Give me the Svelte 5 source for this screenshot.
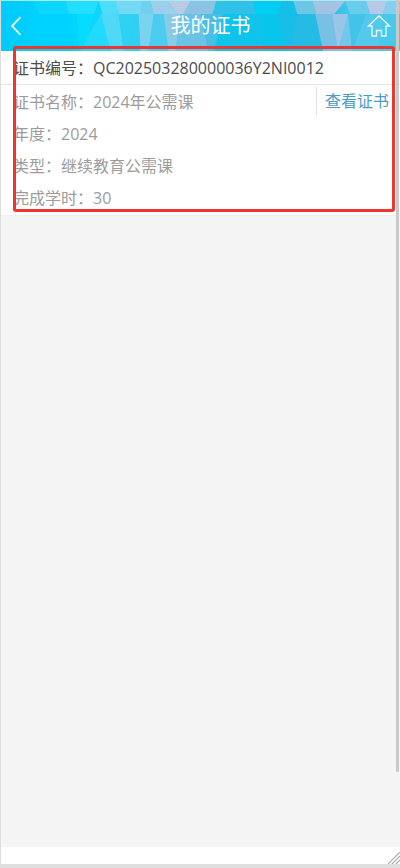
<script lang="ts">
	const certificate = {
		number: "QC202503280000036Y2NI0012",
		rows: [
			{ label: "证书名称", value: "2024年公需课" },
			{ label: "年度", value: "2024" },
			{ label: "类型", value: "继续教育公需课" },
			{ label: "完成学时", value: "30" },
		],
	};
</script>

<div class="page">
	<header>
		<svg class="pattern" viewBox="0 0 400 50" preserveAspectRatio="none" aria-hidden="true">
			<defs>
				<linearGradient id="base">
					<stop offset="0" stop-color="#00cbfb" />
					<stop offset="0.2" stop-color="#02d5ff" />
					<stop offset="0.3" stop-color="#22d2f8" />
					<stop offset="0.4" stop-color="#48cbee" />
					<stop offset="0.5" stop-color="#52c3e6" />
					<stop offset="0.58" stop-color="#0cc3ea" />
					<stop offset="0.78" stop-color="#1abde6" />
					<stop offset="0.88" stop-color="#48c6ea" />
					<stop offset="1" stop-color="#48c9eb" />
				</linearGradient>
			</defs>
			<rect width="400" height="50" fill="url(#base)" />
			<path d="M33 0H65L68 13H38Z" fill="#0ad6ff" />
			<path d="M65 0H98L93 13H68Z" fill="#20dfff" />
			<path d="M98 0H115L118 13H102Z" fill="#4edcfb" />
			<path d="M115 0H142L140 13H118Z" fill="#76d9f4" />
			<path d="M142 0H150L153 13H140Z" fill="#70d0ee" />
			<path d="M150 0H167L177 13H153Z" fill="#9bcfea" />
			<path d="M167 0H190L183 13H177Z" fill="#bccbe4" />
			<path d="M190 0H216L212 13H183Z" fill="#8dc3e2" />
			<path d="M216 0H253L256 13H212Z" fill="#30c1e8" />
			<path d="M253 0H282L277 13H256Z" fill="#02cdf2" />
			<path d="M293 0H312L316 13H297Z" fill="#6cc6e6" />
			<path d="M312 0H345L334 13H316Z" fill="#a3c3e2" />
			<path d="M345 0H366L370 13H350Z" fill="#68cdec" />
			<path d="M366 0H387L383 13H370Z" fill="#b6c9e6" />
			<path d="M387 0H400V13H383Z" fill="#84d0ee" />
			<path d="M32 13H66L74 50H40Z" fill="#00d2ff" />
			<path d="M76 13H93L84 50H78Z" fill="#05dcff" />
			<path d="M80 50L88 34L100 13L110 50Z" fill="#22dafc" />
			<path d="M100 13H118L123 50H110Z" fill="#50d9f7" />
			<path d="M118 13H134L126 50H123Z" fill="#2fd1f4" />
			<path d="M138 13H153L148 50H140Z" fill="#7ad3ef" />
			<path d="M153 13H163L168 50H148Z" fill="#4ccdef" />
			<path d="M163 13H180L175 50H168Z" fill="#89cae7" />
			<path d="M180 13H200L208 50H175Z" fill="#6ac3e5" />
			<path d="M200 13H222L212 50H208Z" fill="#4abfe5" />
			<path d="M224 13H258L264 50H214Z" fill="#10c3ea" />
			<path d="M258 13H277L286 50H264Z" fill="#08c5ec" />
			<path d="M297 13H315L323 50H290Z" fill="#24bbe4" />
			<path d="M315 13H332L340 50H323Z" fill="#78c1e5" />
			<path d="M332 13H348L338 50Z" fill="#9bc5e7" />
			<path d="M348 13L352 50H337Z" fill="#73c8ea" />
			<path d="M348 13H366L352 50Z" fill="#42c3e9" />
			<path d="M366 13H383L378 50H352Z" fill="#54c9eb" />
		</svg>
		<button class="icon-button" type="button" aria-label="返回">
			<svg viewBox="0 0 12 20" width="12" height="20">
				<path d="M10.500 1.200L2 10L10.500 18.800" />
			</svg>
		</button>
		<h1>我的证书</h1>
		<a class="icon-button home" href="#home" aria-label="首页">
			<svg viewBox="0 0 24 24" width="24" height="24">
				<path d="M1.500 12L12 2L22.500 12H19V22H14.500V16.500H9.500V22H5V12Z" />
			</svg>
		</a>
	</header>

	<main>
		<section class="card">
			<h2>证书编号：{certificate.number}</h2>
			<div class="details">
				<dl>
					{#each certificate.rows as row}
						<div class="row">
							<dt>{row.label}：</dt>
							<dd>{row.value}</dd>
						</div>
					{/each}
				</dl>
				<a class="view" href="#certificate">查看证书</a>
			</div>
		</section>
		<div class="outline"></div>
	</main>

	<footer>
		<svg viewBox="0 0 12 12" width="12" height="12" aria-hidden="true">
			<path d="M0 12L12 0M4 12L12 4M8 12L12 8" />
		</svg>
	</footer>
	<div class="scroll-thumb"></div>
</div>

<style>
	:global(body) {
		background: #f4f4f4;
	}
	.page {
		position: relative;
		display: flex;
		flex-direction: column;
		box-sizing: border-box;
		min-height: 100vh;
		border-left: 1px solid #ddd;
		border-bottom: 4px solid #dfdfdf;
		background: #f4f4f4;
		color: #4c4c4c;
		font: 16px/32px "Open Sans", "Noto Sans CJK SC", sans-serif;
	}
	header {
		position: relative;
		display: grid;
		grid-template-columns: 24px 1fr 24px;
		align-items: center;
		height: 51px;
		padding: 0 9px;
		border-top: 1px solid #a6ecf8;
		box-sizing: border-box;
		color: #fff;
	}
	.pattern {
		position: absolute;
		inset: 0;
		width: 100%;
		height: 100%;
	}
	.icon-button {
		position: relative;
		display: flex;
		padding: 0;
		border: 0;
		background: none;
		cursor: pointer;
	}
	.icon-button path {
		fill: none;
		stroke: #e6fbff;
		stroke-width: 1.8;
	}
	.home path {
		stroke-width: 1.3;
	}
	h1 {
		position: relative;
		margin: 0;
		padding-left: 20px;
		font-size: 20px;
		font-weight: 400;
		text-align: center;
	}
	main {
		position: relative;
		flex: 1;
	}
	.card {
		border-bottom: 1px solid #eee;
		background: #fff;
	}
	h2 {
		margin: 0;
		padding: 1px 12px 0;
		border-bottom: 1px solid #e6e6e6;
		font-size: 16px;
		font-weight: 400;
	}
	.details {
		display: flex;
		align-items: flex-start;
		justify-content: space-between;
	}
	dl {
		margin: 0;
		padding: 1px 12px;
		color: #9c9c9c;
	}
	.row {
		display: flex;
	}
	dt,
	dd {
		margin: 0;
	}
	.view {
		margin-top: 2px;
		padding: 0 11px 0 8px;
		border-left: 1px solid #e2e2e2;
		color: #4a9cc6;
		line-height: 28px;
		text-decoration: none;
	}
	.outline {
		position: absolute;
		inset: -5px 5px -1px 12px;
		height: 166px;
		box-sizing: border-box;
		border: 3px solid #e8382f;
		border-radius: 3px;
		pointer-events: none;
	}
	footer {
		display: flex;
		align-items: flex-end;
		justify-content: flex-end;
		height: 17px;
		background: #fff;
	}
	footer path {
		stroke: #aaa;
		stroke-width: 1.2;
	}
	.scroll-thumb {
		position: absolute;
		top: 0;
		right: 1px;
		width: 3px;
		height: 89.4%;
		border-radius: 0 0 2px 2px;
		background: #c9c9c9;
	}
</style>
